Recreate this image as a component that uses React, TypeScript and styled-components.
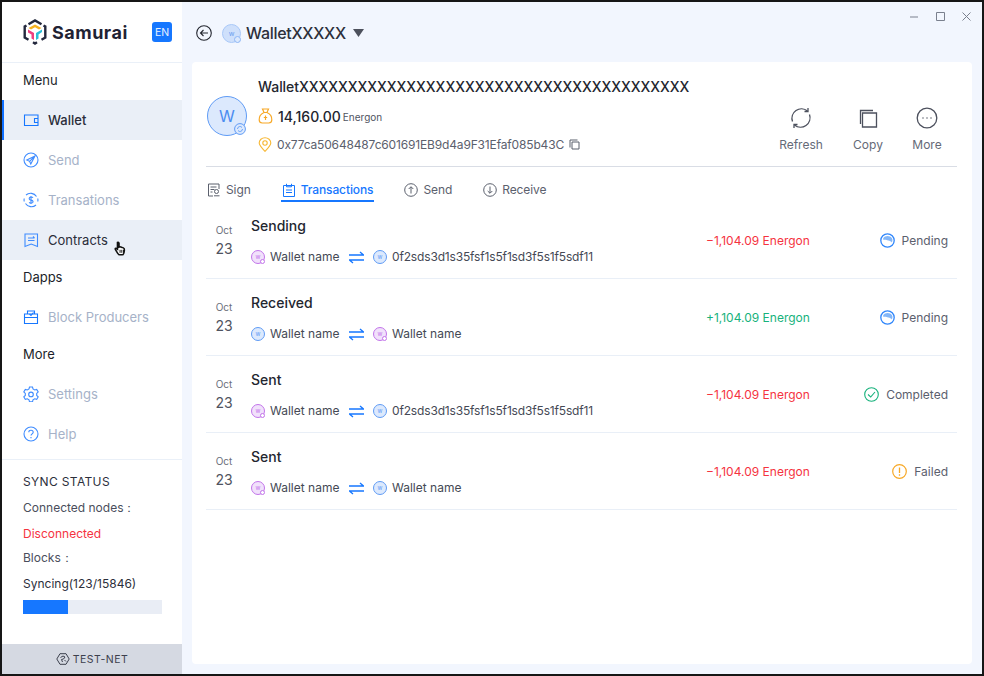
import * as React from 'react';
import styled, { createGlobalStyle } from 'styled-components';

const GlobalStyle = createGlobalStyle`
  html, body { margin: 0; padding: 0; height: 100%; background: #161616; }
  body { font-family: Inter, "Noto Sans", "Liberation Sans", sans-serif; -webkit-font-smoothing: antialiased; }
  #root { height: 100%; }
`;

const Frame = styled.div`
  width: 984px;
  height: 676px;
  box-sizing: border-box;
  padding: 2px;
  display: flex;
  background: #161616;
  overflow: hidden;
`;

const Sidebar = styled.aside`
  width: 180px;
  flex: none;
  background: #fff;
  display: flex;
  flex-direction: column;
`;

const Brand = styled.div`
  height: 61px;
  flex: none;
  box-sizing: border-box;
  border-bottom: 1px solid #eaf0f8;
  padding: 0 10px 0 21px;
  display: flex;
  align-items: center;
  gap: 5px;
`;

const BrandName = styled.span`
  font-size: 18px;
  font-weight: 700;
  letter-spacing: 0.5px;
  color: #1f2233;
  flex: 1;
`;

const LangBadge = styled.span`
  width: 20px;
  height: 20px;
  border-radius: 3px;
  background: #1677ff;
  color: #e8f1ff;
  font-size: 10.5px;
  display: flex;
  align-items: center;
  justify-content: center;
`;

const SectionLabel = styled.div`
  height: 37px;
  flex: none;
  padding: 0 0 3px 21px;
  box-sizing: border-box;
  display: flex;
  align-items: center;
  font-size: 13px;
  color: #1c1f2a;
`;

const NavItem = styled.div<{ $active?: boolean; $hover?: boolean }>`
  height: 40px;
  flex: none;
  box-sizing: border-box;
  padding-left: 19px;
  display: flex;
  align-items: center;
  gap: 9px;
  font-size: 13px;
  position: relative;
  color: ${p => (p.$active || p.$hover ? '#2a2d3a' : '#a6b2c8')};
  font-weight: ${p => (p.$active ? 500 : 400)};
  background: ${p => (p.$active || p.$hover ? '#eaeff7' : 'transparent')};
  border-left: 2px ${p => (p.$active ? 'solid #0f6fff' : 'solid transparent')};
`;

const NavIcon = styled.svg`
  width: 16px;
  height: 16px;
  flex: none;
  fill: none;
  stroke: #3f8cff;
  stroke-width: 1.1;
`;

const Cursor = styled.svg`
  position: absolute;
  left: 110px;
  top: 21px;
  width: 13px;
  height: 15px;
`;

const SyncBlock = styled.div`
  border-top: 1px solid #eaf0f8;
  margin-top: 5px;
  padding: 9px 20px 0 21px;
  flex: 1;
  display: flex;
  flex-direction: column;
`;

const SyncLine = styled.div<{ $tone?: 'title' | 'error' | 'strong' }>`
  height: 25px;
  flex: none;
  display: flex;
  align-items: center;
  font-size: 12px;
  margin-bottom: ${p => (p.$tone === 'title' ? 2 : 0)}px;
  letter-spacing: ${p => (p.$tone === 'title' ? 0.35 : 0)}px;
  color: ${p =>
    p.$tone === 'error' ? '#f5333f' : p.$tone === 'title' || p.$tone === 'strong' ? '#2c2f3b' : '#4a4e5c'};
`;

const ProgressTrack = styled.div`
  height: 14px;
  margin-top: 4px;
  background: #e9edf5;
`;

const ProgressFill = styled.div`
  height: 100%;
  background: #1677ff;
`;

const NetBar = styled.div`
  height: 30px;
  flex: none;
  background: #d5d9e2;
  display: flex;
  align-items: center;
  justify-content: center;
  gap: 3px;
  font-size: 10.5px;
  letter-spacing: 0.5px;
  color: #3c404d;
`;

const Main = styled.main`
  flex: 1;
  background: #f2f6fe;
  display: flex;
  flex-direction: column;
  padding: 0 10px 10px 10px;
  position: relative;
  min-width: 0;
`;

const WindowControls = styled.div`
  position: absolute;
  top: 9px;
  right: 10px;
  display: flex;
  gap: 15px;
`;

const ControlIcon = styled.svg`
  width: 11px;
  height: 11px;
  fill: none;
  stroke: #7a808e;
  stroke-width: 1;
`;

const TopBar = styled.div`
  height: 60px;
  flex: none;
  box-sizing: border-box;
  display: flex;
  align-items: center;
  padding: 2px 0 0 4px;
  color: #2a2d3a;
`;

const WalletTitle = styled.span`
  font-size: 16px;
  font-weight: 500;
  letter-spacing: -0.3px;
  margin: 0 7px 0 5px;
  color: #2c2f3b;
`;

const SmallAvatar = styled.span`
  width: 19px;
  height: 19px;
  box-sizing: border-box;
  margin-left: 10px;
  border-radius: 50%;
  background: #cfe0fb;
  border: 1px solid #a9c8f8;
  color: #6a9df0;
  font-size: 7px;
  display: flex;
  align-items: center;
  justify-content: center;
  position: relative;
  &::after {
    content: '';
    position: absolute;
    right: -1px;
    bottom: -1px;
    width: 7px;
    height: 7px;
    box-sizing: border-box;
    border-radius: 50%;
    background: #dce9fd;
    border: 1px solid #8db6f6;
  }
`;

const Card = styled.section`
  flex: 1;
  background: #fff;
  border-radius: 4px;
  padding: 0 15px 0 14px;
  display: flex;
  flex-direction: column;
`;

const AccountHead = styled.div`
  height: 105px;
  flex: none;
  box-sizing: border-box;
  border-bottom: 1px solid #d9dde5;
  display: flex;
  align-items: flex-start;
`;

const BigAvatar = styled.div`
  width: 40px;
  height: 40px;
  box-sizing: border-box;
  margin: 34px 11px 0 1px;
  flex: none;
  border-radius: 50%;
  background: #dce9fd;
  border: 1px solid #5f9bf5;
  color: #4a8cf0;
  font-size: 16px;
  display: flex;
  align-items: center;
  justify-content: center;
  position: relative;
`;

const AvatarMark = styled.svg`
  position: absolute;
  right: 0;
  bottom: 0;
  width: 12px;
  height: 12px;
  fill: #dce9fd;
  stroke: #5f9bf5;
  stroke-width: 1;
`;

const AccountInfo = styled.div`
  flex: 1;
  display: flex;
  flex-direction: column;
  min-width: 0;
`;

const AccountName = styled.div`
  height: 47px;
  display: flex;
  align-items: center;
  padding-top: 1px;
  box-sizing: border-box;
  font-size: 14px;
  font-weight: 500;
  letter-spacing: -0.05px;
  color: #23262f;
`;

const Balance = styled.div`
  height: 14px;
  display: flex;
  align-items: center;
  gap: 5px;
  font-size: 14px;
  font-weight: 500;
  color: #23262f;
  small {
    font-size: 10px;
    font-weight: 400;
    color: #50545f;
    margin: 2px 0 0 -3px;
  }
`;

const Address = styled.div`
  margin-top: 14px;
  height: 14px;
  display: flex;
  align-items: center;
  gap: 5px;
  font-size: 12px;
  letter-spacing: -0.16px;
  color: #5b606d;
`;

const Actions = styled.div`
  display: flex;
  margin-top: 45px;
  padding-right: 1px;
`;

const Action = styled.div<{ $w: number }>`
  width: ${p => p.$w}px;
  display: flex;
  flex-direction: column;
  align-items: center;
  gap: 8px;
  font-size: 12px;
  color: #656a77;
`;

const ActionIcon = styled.svg`
  width: 22px;
  height: 22px;
  fill: none;
  stroke: #4c505d;
  stroke-width: 1.3;
`;

const Tabs = styled.div`
  height: 35px;
  flex: none;
  display: flex;
  gap: 29px;
`;

const Tab = styled.div<{ $active?: boolean }>`
  height: 35px;
  box-sizing: border-box;
  padding: 12px 1px 0;
  display: flex;
  align-items: center;
  gap: 5px;
  font-size: 12px;
  letter-spacing: -0.1px;
  color: ${p => (p.$active ? '#1677ff' : '#5b606d')};
  font-weight: ${p => (p.$active ? 500 : 400)};
  border-bottom: 2px solid ${p => (p.$active ? '#1677ff' : 'transparent')};
`;

const TabIcon = styled.svg`
  width: 14px;
  height: 14px;
  fill: none;
  stroke: currentColor;
  stroke-width: 1;
`;

const TxRow = styled.div`
  height: 77px;
  flex: none;
  box-sizing: border-box;
  border-bottom: 1px solid #e9eff7;
  display: grid;
  grid-template-columns: 45px 455px 1fr auto;
  padding-right: 9px;
  align-items: center;
`;

const DateCell = styled.div`
  display: flex;
  flex-direction: column;
  align-items: center;
  width: 36px;
  padding-top: 1px;
  color: #4f5360;
  span {
    font-size: 10px;
    height: 16px;
    line-height: 16px;
    color: #6b6f7b;
  }
  strong {
    font-size: 14px;
    font-weight: 400;
    line-height: 22px;
  }
`;

const TxMain = styled.div`
  display: flex;
  flex-direction: column;
  gap: 13px;
  padding-top: 1px;
`;

const TxTitle = styled.div`
  font-size: 14px;
  font-weight: 500;
  line-height: 20px;
  color: #23262f;
`;

const Parties = styled.div`
  display: flex;
  align-items: center;
  font-size: 12px;
  color: #454955;
  line-height: 16px;
`;

const Party = styled.div<{ $w?: number; $tight?: boolean }>`
  display: flex;
  align-items: center;
  gap: 5px;
  width: ${p => (p.$w ? `${p.$w}px` : 'auto')};
  letter-spacing: ${p => (p.$tight ? -0.16 : 0)}px;
`;

const MiniAvatar = styled.span<{ $purple?: boolean }>`
  width: 14px;
  height: 14px;
  box-sizing: border-box;
  flex: none;
  border-radius: 50%;
  position: relative;
  font-size: 6px;
  display: flex;
  align-items: center;
  justify-content: center;
  background: ${p => (p.$purple ? '#f1e1fb' : '#dce9fd')};
  border: 1px solid ${p => (p.$purple ? '#c274ea' : '#5f9bf5')};
  color: ${p => (p.$purple ? '#c274ea' : '#5f9bf5')};
  &::after {
    content: '';
    display: ${p => (p.$purple ? 'block' : 'none')};
    position: absolute;
    right: -1px;
    bottom: -1px;
    width: 5px;
    height: 5px;
    box-sizing: border-box;
    border-radius: 50%;
    background: #fff;
    border: 1px solid #c274ea;
  }
`;

const SwapIcon = styled.svg`
  width: 15px;
  height: 13px;
  fill: none;
  stroke: #1677ff;
  stroke-width: 1.3;
  margin-right: 9px;
  flex: none;
`;

const Amount = styled.div<{ $in?: boolean }>`
  font-size: 12px;
  color: ${p => (p.$in ? '#17b27c' : '#f5333f')};
`;

const Status = styled.div`
  display: flex;
  align-items: center;
  gap: 7px;
  font-size: 12px;
  color: #5b606d;
`;

const StatusIcon = styled.svg`
  width: 15px;
  height: 15px;
  fill: none;
`;

const WalletIcon = () => (
  <NavIcon viewBox="0 0 16 16">
    <path d="M1.500 3h13.500v10.500H1.500z" stroke="#1677ff" />
    <path d="M15 6.500h-3.500v4H15" stroke="#1677ff" />
  </NavIcon>
);
const SendIcon = () => (
  <NavIcon viewBox="0 0 16 16">
    <circle cx="8" cy="8" r="7" />
    <path d="M12 4 3.800 8l2.800 1.300L7.800 12zM6.600 9.300 12 4" />
  </NavIcon>
);
const DollarIcon = () => (
  <NavIcon viewBox="0 0 16 16">
    <path d="M13.500 4.500A7 7 0 0 0 3 3M2.500 11.500A7 7 0 0 0 13 13M1.200 6.500a7 7 0 0 0 0 3M14.800 6.500a7 7 0 0 1 0 3" />
    <path d="M10 5.800C9.500 5 7 4.600 6.300 6c-.6 1.500 1 2 1.800 2.100 1 .2 2.400.8 1.800 2.100-.6 1.200-3 1-3.800.1M8 4v8" />
  </NavIcon>
);
const ContractIcon = () => (
  <NavIcon viewBox="0 0 16 16">
    <path d="M2 2h12.500v12.500L8.200 12l-6.200 2.500z" />
    <path d="M5 6h6.500M5 8.500h6.500M10 4.500 11.500 6" />
  </NavIcon>
);
const ProducerIcon = () => (
  <NavIcon viewBox="0 0 16 16">
    <path d="M1.500 5h13v9.500h-13z" stroke="#1677ff" />
    <path d="M4.500 5V2h7v3M1.500 8.500h13M6.500 5 8 6.500 10.500 3.500" stroke="#1677ff" />
  </NavIcon>
);
const GearIcon = () => (
  <NavIcon viewBox="0 0 16 16">
    <path d="M6.500 1h3l.5 2 1.700 1 2-.6 1.500 2.600-1.500 1.400v2l1.500 1.400-1.500 2.600-2-.6-1.700 1-.5 2h-3l-.5-2-1.700-1-2 .6L.8 10.800l1.500-1.400v-2L.8 6l1.500-2.600 2 .6 1.700-1z" />
    <circle cx="8" cy="8.400" r="2.300" />
  </NavIcon>
);
const HelpIcon = () => (
  <NavIcon viewBox="0 0 16 16">
    <circle cx="8" cy="8" r="7" />
    <path d="M5.800 6.200C5.900 3.600 10.200 3.700 10.200 6.200c0 1.600-2.200 1.700-2.200 3.400M8 11v1.200" />
  </NavIcon>
);

const Logo = () => (
  <svg width="24" height="26" viewBox="0 0 24 26" fill="none">
    <path d="M5.500 5.300 12 1.500l6.500 3.800M20.500 6.500l1.800 1v11l-3.800 2.200M14 23.300l-2 1.200-2-1.200M5.500 20.700 1.700 18.500v-11l1.800-1" stroke="#23283d" strokeWidth="2.400" />
    <path d="M12 5.500 18.500 9 16 10.500 12 8.300 8 10.500 5.500 9z" fill="#f5b120" />
    <path d="M5 10.500l6 3.500v7l-2.500-1.500v-4L5 13.500z" fill="#ee3f80" />
    <path d="M19 10.500l-6 3.500v7l2.500-1.500v-4l3.500-2.500z" fill="#2bbfd8" />
  </svg>
);

const PendingIcon = () => (
  <StatusIcon viewBox="0 0 15 15">
    <circle cx="7.500" cy="7.500" r="6.700" stroke="#2f86fb" strokeWidth="1.300" />
    <path d="M3.200 5.300C5 2.500 10 2.300 12 5.300c.8 1.300.5 3.300-.2 4.200-.6-1-1.600-1.300-2.400-1.700C8 7.300 5.500 6.300 3.200 6.800z" fill="#84b7f8" />
  </StatusIcon>
);
const CompletedIcon = () => (
  <StatusIcon viewBox="0 0 15 15">
    <circle cx="7.500" cy="7.500" r="6.800" stroke="#17b27c" strokeWidth="1.100" />
    <path d="M4 7.500 6.700 10 11 5" stroke="#17b27c" strokeWidth="1.100" />
  </StatusIcon>
);
const FailedIcon = () => (
  <StatusIcon viewBox="0 0 15 15">
    <circle cx="7.500" cy="7.500" r="6.800" stroke="#f7a826" strokeWidth="1.200" />
    <path d="M7.500 3.500v5.500M7.500 10.300v1.400" stroke="#f7a826" strokeWidth="1.300" />
  </StatusIcon>
);

interface Tx {
  title: string;
  fromPurple: boolean;
  from: string;
  to: string;
  amount: string;
  incoming?: boolean;
  status: 'Pending' | 'Completed' | 'Failed';
}

const HASH = '0f2sds3d1s35fsf1s5f1sd3f5s1f5sdf11';

const txs: Tx[] = [
  { title: 'Sending', fromPurple: true, from: 'Wallet name', to: HASH, amount: '−1,104.09 Energon', status: 'Pending' },
  { title: 'Received', fromPurple: false, from: 'Wallet name', to: 'Wallet name', amount: '+1,104.09 Energon', incoming: true, status: 'Pending' },
  { title: 'Sent', fromPurple: true, from: 'Wallet name', to: HASH, amount: '−1,104.09 Energon', status: 'Completed' },
  { title: 'Sent', fromPurple: true, from: 'Wallet name', to: 'Wallet name', amount: '−1,104.09 Energon', status: 'Failed' },
];

export default function App() {
  return (
    <Frame>
      <GlobalStyle />
      <Sidebar>
        <Brand>
          <Logo />
          <BrandName>Samurai</BrandName>
          <LangBadge>EN</LangBadge>
        </Brand>
        <SectionLabel>Menu</SectionLabel>
        <NavItem $active><WalletIcon />Wallet</NavItem>
        <NavItem><SendIcon />Send</NavItem>
        <NavItem><DollarIcon />Transations</NavItem>
        <NavItem $hover>
          <ContractIcon />Contracts
          <Cursor viewBox="0 0 15 17">
            <path d="M4 1.500c.8-.6 1.800 0 1.800 1V7l1-.4 1.200.3 1.200.3 1.600.6c1 .5 1.400 1.300 1.200 2.500l-.6 3.400c-.1 1-1 2-2 2H6.500c-1 0-1.700-.7-2.200-1.500L1.500 9.500c-.4-.8.5-1.700 1.300-1.200l1.200 1z" fill="#fff" stroke="#111" strokeWidth="1.800" />
            <path d="M7 10v3.500M9 10v3.500M11 10v3.500" stroke="#111" strokeWidth="1.100" />
          </Cursor>
        </NavItem>
        <SectionLabel>Dapps</SectionLabel>
        <NavItem><ProducerIcon />Block Producers</NavItem>
        <SectionLabel>More</SectionLabel>
        <NavItem><GearIcon />Settings</NavItem>
        <NavItem><HelpIcon />Help</NavItem>
        <SyncBlock>
          <SyncLine $tone="title">SYNC STATUS</SyncLine>
          <SyncLine>Connected nodes：</SyncLine>
          <SyncLine $tone="error">Disconnected</SyncLine>
          <SyncLine>Blocks：</SyncLine>
          <SyncLine $tone="strong">Syncing(123/15846)</SyncLine>
          <ProgressTrack>
            <ProgressFill style={{ width: `${(45 / 139) * 100}%` }} />
          </ProgressTrack>
        </SyncBlock>
        <NetBar>
          <svg width="14" height="12" viewBox="0 0 14 12" fill="none" stroke="#3c404d" strokeWidth="1">
            <path d="M4 .7h6L13.200 6 10 11.300H4L.8 6z" />
            <path d="M4.500 4.500 7 3l2 1-1.500 2-2 .5L6.500 9M8.500 7l1.500 1.500" />
          </svg>
          TEST-NET
        </NetBar>
      </Sidebar>

      <Main>
        <WindowControls>
          <ControlIcon viewBox="0 0 11 11"><path d="M1 6h8" /></ControlIcon>
          <ControlIcon viewBox="0 0 11 11"><path d="M1.500 1.500h8v8h-8z" /></ControlIcon>
          <ControlIcon viewBox="0 0 11 11"><path d="M1.500 1.500l8 8M9.500 1.500l-8 8" /></ControlIcon>
        </WindowControls>
        <TopBar>
          <svg width="16" height="16" viewBox="0 0 16 16" fill="none" stroke="#23262f" strokeWidth="1.100">
            <circle cx="8" cy="8" r="7.300" />
            <path d="M12 8H4.500M7.500 5 4.500 8l3 3" />
          </svg>
          <SmallAvatar>w</SmallAvatar>
          <WalletTitle>WalletXXXXX</WalletTitle>
          <svg width="11" height="8" viewBox="0 0 11 8"><path d="M0 0h11L5.500 8z" fill="#4d515d" /></svg>
        </TopBar>
        <Card>
          <AccountHead>
            <BigAvatar>
              W
              <AvatarMark viewBox="0 0 12 12">
                <circle cx="6" cy="6" r="5.400" />
                <path d="M3.500 6a2.500 2.500 0 0 1 4.500-1.500M8.500 6A2.500 2.500 0 0 1 4 7.500" fill="none" strokeWidth="0.900" />
              </AvatarMark>
            </BigAvatar>
            <AccountInfo>
              <AccountName>WalletXXXXXXXXXXXXXXXXXXXXXXXXXXXXXXXXXXXXXXXX</AccountName>
              <Balance>
                <svg width="15" height="16" viewBox="0 0 15 16" fill="none" stroke="#f7a826" strokeWidth="1.200">
                  <path d="M4.500 1h6L9 4.500H6zM6 4.500C2.500 6 1 9 1.200 12c.1 2 1.300 3 3 3h6.600c1.700 0 2.900-1 3-3C14 9 12.500 6 9 4.500z" />
                  <path d="M7.500 7.500v4.500M5.800 9.500h3.400" />
                </svg>
                14,160.00 <small>Energon</small>
              </Balance>
              <Address>
                <svg width="14" height="15" viewBox="0 0 14 15" fill="none" stroke="#f7b733" strokeWidth="1.100">
                  <path d="M7 14.300C3.500 10.800 1.200 8.500 1.200 6a5.800 5.300 0 0 1 11.600 0c0 2.500-2.300 4.800-5.800 8.300z" />
                  <circle cx="7" cy="6" r="2.200" />
                </svg>
                0x77ca50648487c601691EB9d4a9F31Efaf085b43C
                <svg width="11" height="11" viewBox="0 0 11 11" fill="none" stroke="#5b606d" strokeWidth="1">
                  <path d="M1 8.500V1h7.500M3 3h7v7H3z" />
                </svg>
              </Address>
            </AccountInfo>
            <Actions>
              <Action $w={74}>
                <ActionIcon viewBox="0 0 22 22">
                  <path d="M2.500 14.500A9.500 9.500 0 0 1 17.500 4M19.500 7.500A9.500 9.500 0 0 1 4.500 18" />
                  <path d="M18 1v3.500h-3.500M4 21v-3.500h3.500" />
                </ActionIcon>
                Refresh
              </Action>
              <Action $w={60}>
                <ActionIcon viewBox="0 0 22 22">
                  <path d="M3.500 17V3.500H16" />
                  <path d="M5.500 6h14v14h-14z" />
                </ActionIcon>
                Copy
              </Action>
              <Action $w={58}>
                <ActionIcon viewBox="0 0 22 22">
                  <circle cx="11" cy="11" r="9.800" />
                  <path d="M6.500 11h1M10.500 11h1M14.500 11h1" strokeWidth="1.600" />
                </ActionIcon>
                More
              </Action>
            </Actions>
          </AccountHead>
          <Tabs>
            <Tab>
              <TabIcon viewBox="0 0 14 14">
                <path d="M12 6V1H1.500v12H6M3.500 4h6M3.500 6.500h4M3.500 9h2" />
                <circle cx="9.500" cy="8.500" r="2" />
                <path d="M7 12.800h5.500" />
              </TabIcon>
              Sign
            </Tab>
            <Tab $active>
              <TabIcon viewBox="0 0 14 14">
                <path d="M1.500 2.500h11v11h-11zM4.500.8v3h5v-3M4 7h6M4 9.500h6" />
              </TabIcon>
              Transactions
            </Tab>
            <Tab>
              <TabIcon viewBox="0 0 14 14">
                <circle cx="7" cy="7" r="6.300" />
                <path d="M7 10.500V4M4.700 6 7 3.700 9.300 6" />
              </TabIcon>
              Send
            </Tab>
            <Tab>
              <TabIcon viewBox="0 0 14 14">
                <circle cx="7" cy="7" r="6.300" />
                <path d="M7 3.500V10M4.700 8 7 10.300 9.300 8" />
              </TabIcon>
              Receive
            </Tab>
          </Tabs>
          {txs.map((tx, i) => (
            <TxRow key={i}>
              <DateCell>
                <span>Oct</span>
                <strong>23</strong>
              </DateCell>
              <TxMain>
                <TxTitle>{tx.title}</TxTitle>
                <Parties>
                  <Party $w={98}>
                    <MiniAvatar $purple={tx.fromPurple}>w</MiniAvatar>
                    {tx.from}
                  </Party>
                  <SwapIcon viewBox="0 0 15 13">
                    <path d="M0 4h14.500L11 1M15 9H.5L4 12" />
                  </SwapIcon>
                  <Party $tight={tx.to === HASH}>
                    <MiniAvatar $purple={!tx.fromPurple && tx.to !== HASH}>w</MiniAvatar>
                    {tx.to}
                  </Party>
                </Parties>
              </TxMain>
              <Amount $in={tx.incoming}>{tx.amount}</Amount>
              <Status>
                {tx.status === 'Pending' && <PendingIcon />}
                {tx.status === 'Completed' && <CompletedIcon />}
                {tx.status === 'Failed' && <FailedIcon />}
                {tx.status}
              </Status>
            </TxRow>
          ))}
        </Card>
      </Main>
    </Frame>
  );
}
